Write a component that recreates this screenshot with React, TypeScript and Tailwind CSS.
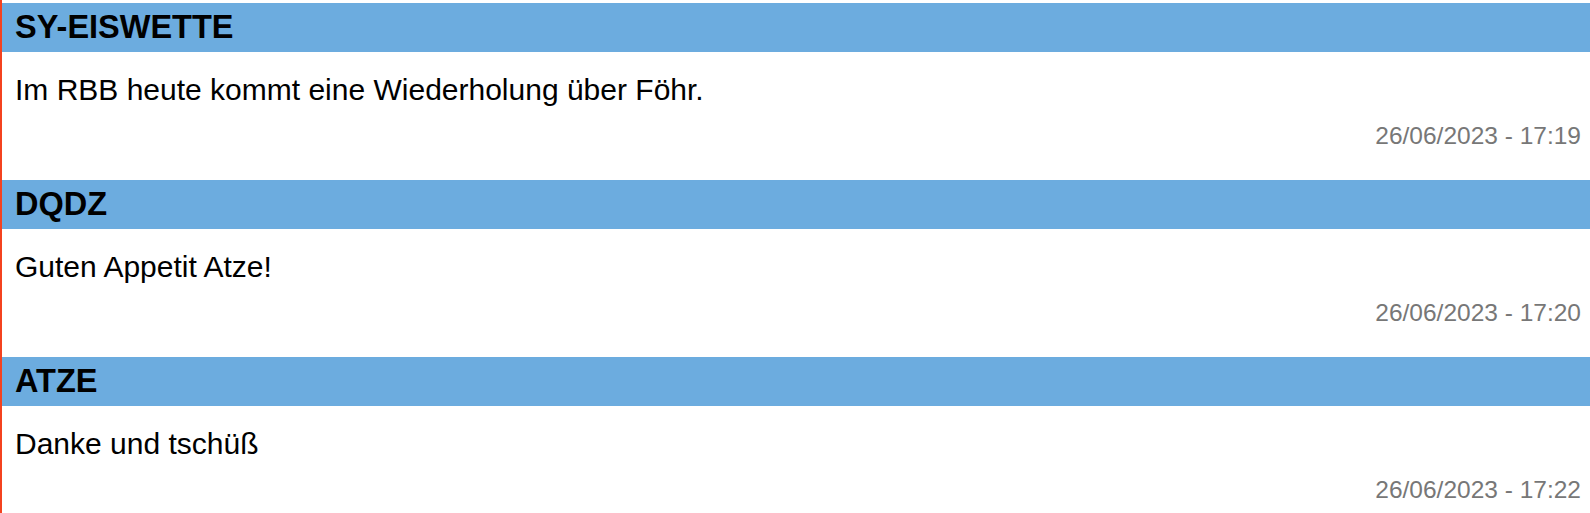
import React from "react";

const items = [
  { name: "SY-EISWETTE", text: "Im RBB heute kommt eine Wiederholung über Föhr.", date: "26/06/2023 - 17:19" },
  { name: "DQDZ", text: "Guten Appetit Atze!", date: "26/06/2023 - 17:20" },
  { name: "ATZE", text: "Danke und tschüß", date: "26/06/2023 - 17:22" },
];

export default function App() {
  return (
    <div className="min-h-[513px] w-full bg-white border-l-2 border-[#f4421f] pt-[3px] font-['Liberation_Sans',Arial,sans-serif] text-black overflow-hidden">
      {items.map((it) => (
        <div key={it.name} className="h-[177px]">
          <div className="h-[49px] bg-[#6cacdf] flex items-center pl-[13px]">
            <span className="text-[32.5px] font-bold leading-none">{it.name}</span>
          </div>
          <div className="pl-[13px] pt-[21px] text-[30px] leading-[34px]">{it.text}</div>
          <div className="pt-[15px] pr-[9px] text-right text-[24.5px] leading-[28px] text-[#777777]">{it.date}</div>
        </div>
      ))}
    </div>
  );
}
